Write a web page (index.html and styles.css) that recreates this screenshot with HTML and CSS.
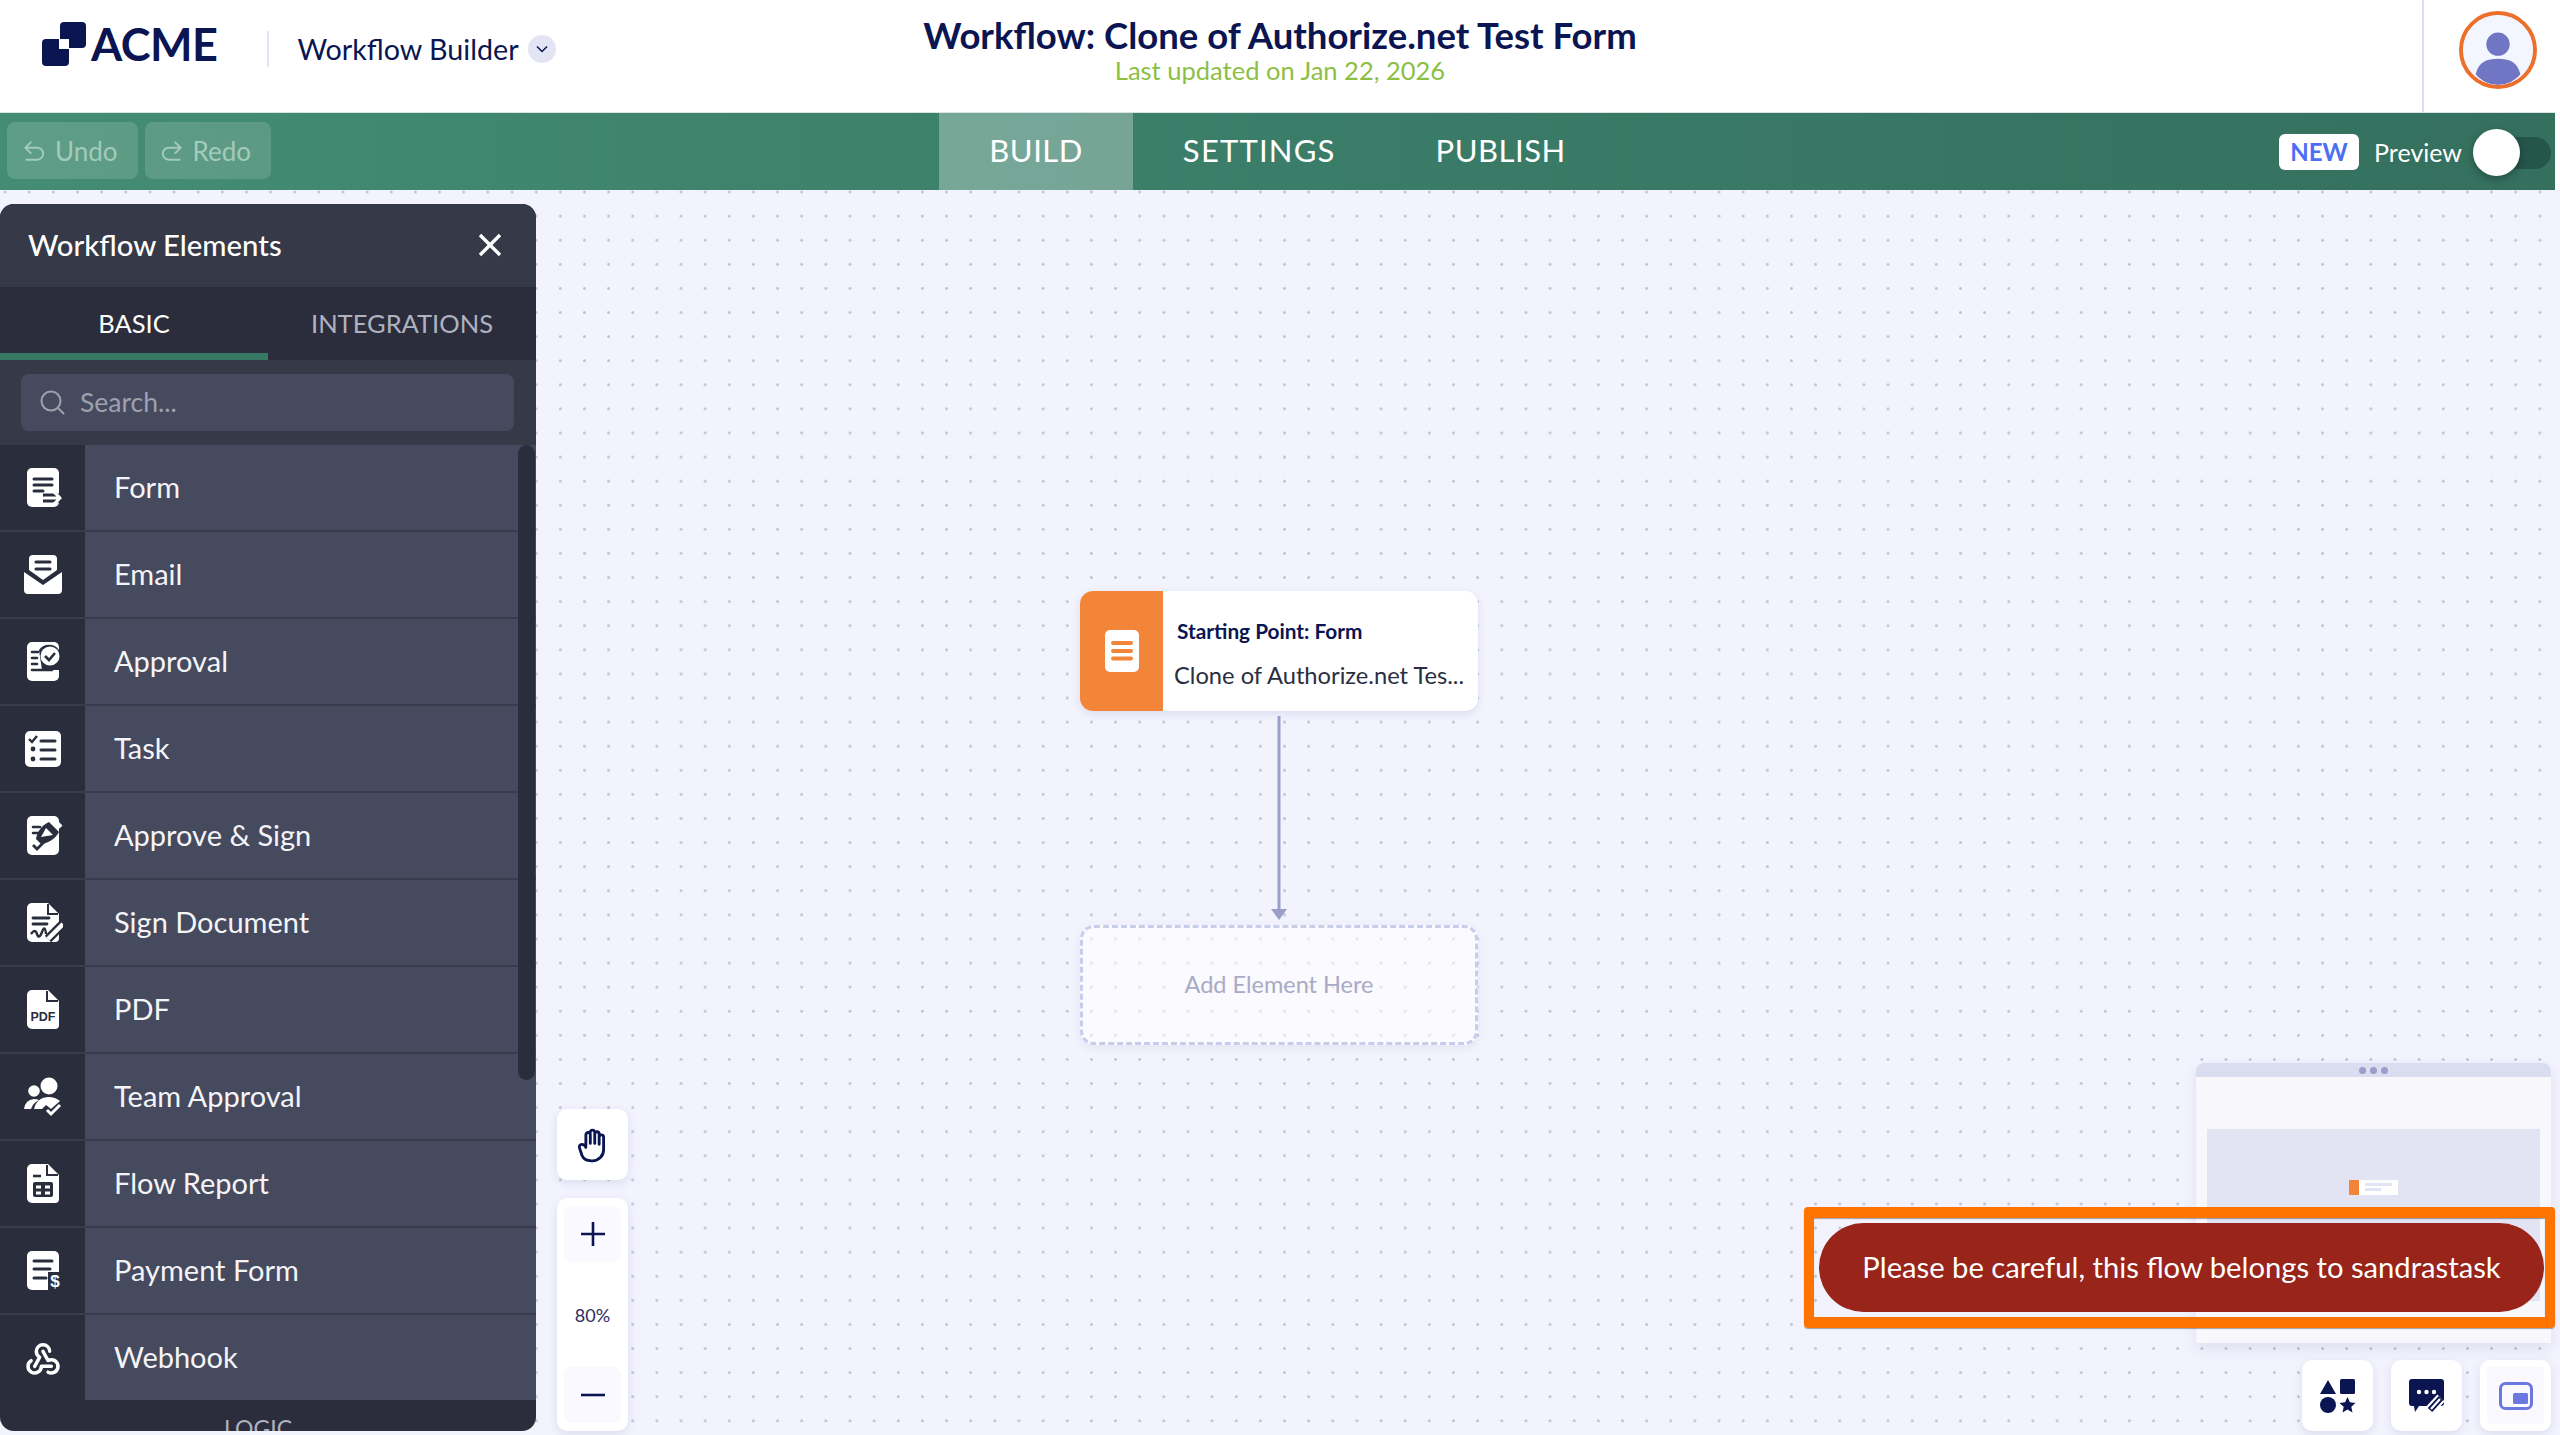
FILE: index.html
```html
<!DOCTYPE html>
<html lang="en">
<head>
<meta charset="utf-8">
<title>Workflow Builder</title>
<link rel="stylesheet" href="styles.css">
</head>
<body>
<header class="topbar">
  <div class="brand">
    <svg class="logo-mark" width="44" height="44" viewBox="0 0 44 44"><rect x="18" y="0" width="26" height="26" rx="4" fill="#0a1551"/><rect x="0" y="17" width="27" height="27" rx="4" fill="#0a1551"/><rect x="17" y="17" width="10" height="10" fill="#fff"/></svg>
    <span class="logo-text">ACME</span>
    <span class="brand-divider"></span>
    <span class="brand-product">Workflow Builder</span>
    <span class="brand-chevron"><svg width="16" height="16" viewBox="0 0 16 16"><path d="M3 5.500l5 5 5-5" fill="none" stroke="#0a1551" stroke-width="1.500"/></svg></span>
  </div>
  <div class="title-block">
    <div class="title">Workflow: Clone of Authorize.net Test Form</div>
    <div class="subtitle">Last updated on Jan 22, 2026</div>
  </div>
  <div class="account">
    <div class="avatar"><svg width="70" height="70" viewBox="0 0 72 72"><circle cx="36" cy="36" r="36" fill="#f3f6ff"/><circle cx="36" cy="30" r="12" fill="#7075c4"/><path d="M13 61c3-13 12-16 23-16s20 3 23 16c-6 7-14 11-23 11s-17-4-23-11z" fill="#7075c4"/></svg></div>
  </div>
</header>

<div class="navwrap">
<nav class="navbar">
  <div class="history">
    <button class="hist-btn"><svg width="26" height="26" viewBox="0 0 24 24" fill="none" stroke="currentColor" stroke-width="1.800" stroke-linecap="round" stroke-linejoin="round"><path d="M9 14l-5-5 5-5M4 9h11a5.500 5.500 0 0 1 0 11H5"/></svg>Undo</button>
    <button class="hist-btn"><svg width="26" height="26" viewBox="0 0 24 24" fill="none" stroke="currentColor" stroke-width="1.800" stroke-linecap="round" stroke-linejoin="round"><path d="M15 14l5-5-5-5M20 9H9a5.500 5.500 0 0 0 0 11h10"/></svg>Redo</button>
  </div>
  <div class="tabs">
    <a class="tab tab-active">BUILD</a>
    <a class="tab tab-wide">SETTINGS</a>
    <a class="tab">PUBLISH</a>
  </div>
  <div class="preview">
    <span class="badge-new">NEW</span>
    <span class="preview-label">Preview</span>
    <span class="toggle"><span class="toggle-knob"></span></span>
  </div>
</nav>
</div>

<main class="canvas">
  <aside class="panel">
    <div class="panel-head">
      <span>Workflow Elements</span>
      <svg width="24" height="24" viewBox="0 0 24 24"><path d="M2 2l20 20M22 2L2 22" stroke="#fff" stroke-width="3.400"/></svg>
    </div>
    <div class="panel-tabs">
      <div class="panel-tab panel-tab-active">BASIC</div>
      <div class="panel-tab">INTEGRATIONS</div>
    </div>
    <div class="panel-search">
      <div class="search-box">
        <svg width="26" height="26" viewBox="0 0 26 26" fill="none" stroke="#9ea0ad" stroke-width="2"><circle cx="12" cy="12" r="9.500"/><path d="M19 19l5.500 5.500" stroke-linecap="round"/></svg>
        <span>Search...</span>
      </div>
    </div>
    <div class="list">
      <div class="row"><div class="row-icon"><svg width="40" height="40" viewBox="0 0 40 40"><rect x="4" y="0" width="32" height="39" rx="5" fill="#fff"/><path d="M11 11h18M11 17h18M11 23h9" stroke="#2a2d3c" stroke-width="3" stroke-linecap="round"/><path d="M20 30h16" stroke="#2a2d3c" stroke-width="9"/><path d="M21 30h16M31 24l6 6-6 6" fill="none" stroke="#fff" stroke-width="3" stroke-linecap="round"/></svg></div><div class="row-label">Form</div></div>
      <div class="row"><div class="row-icon"><svg width="40" height="40" viewBox="0 0 40 40"><path d="M6 4a4 4 0 0 1 4-4h20a4 4 0 0 1 4 4v11l-14 10-14-10z" fill="#fff"/><path d="M13 7h14M13 14h14" stroke="#2a2d3c" stroke-width="3" stroke-linecap="round"/><path d="M1 17l19 13 19-13v18a4 4 0 0 1-4 4H5a4 4 0 0 1-4-4z" fill="#fff"/></svg></div><div class="row-label">Email</div></div>
      <div class="row"><div class="row-icon"><svg width="40" height="40" viewBox="0 0 40 40"><rect x="4" y="0" width="32" height="39" rx="5" fill="#fff"/><path d="M9 10h6M9 16h5M9 22h5M9 28h20" stroke="#2a2d3c" stroke-width="2.600" stroke-linecap="round"/><path d="M16 8a12 12 0 0 1 20 0v20H19z" fill="#2a2d3c"/><circle cx="27" cy="14" r="9.500" fill="#fff"/><path d="M22 14l4 4 6-7" fill="none" stroke="#2a2d3c" stroke-width="2.600"/></svg></div><div class="row-label">Approval</div></div>
      <div class="row"><div class="row-icon"><svg width="40" height="40" viewBox="0 0 40 40"><rect x="2" y="2" width="36" height="36" rx="5" fill="#fff"/><path d="M6 10l3 3 5-6" fill="none" stroke="#2a2d3c" stroke-width="2.400"/><circle cx="10" cy="20" r="2.400" fill="#2a2d3c"/><circle cx="10" cy="30" r="2.400" fill="#2a2d3c"/><path d="M18 12h14M18 21h14M18 30h14" stroke="#2a2d3c" stroke-width="3" stroke-linecap="round"/></svg></div><div class="row-label">Task</div></div>
      <div class="row"><div class="row-icon"><svg width="40" height="40" viewBox="0 0 40 40"><rect x="4" y="0" width="32" height="39" rx="5" fill="#fff"/><path d="M10 11h7M10 17h5" stroke="#2a2d3c" stroke-width="2.600" stroke-linecap="round"/><path d="M13 23c1-7 5-13 13-17l10 10c-4 7-10 11-18 12z" fill="#2a2d3c"/><path d="M18 21l5-9 7 7z" fill="#fff"/><path d="M30 3l8 8" stroke="#fff" stroke-width="4"/><path d="M10 29l4 4 8-8" fill="none" stroke="#2a2d3c" stroke-width="2.800"/></svg></div><div class="row-label">Approve &amp; Sign</div></div>
      <div class="row"><div class="row-icon"><svg width="40" height="40" viewBox="0 0 40 40"><path d="M9 0h16l11 11v24a4 4 0 0 1-4 4H9a5 5 0 0 1-5-5V5a5 5 0 0 1 5-5z" fill="#fff"/><path d="M25 1v10h10" fill="none" stroke="#2a2d3c" stroke-width="2"/><path d="M10 15h16M10 21h14" stroke="#2a2d3c" stroke-width="2.800" stroke-linecap="round"/><path d="M8 31q4-6 6 0t5-2 4 2" fill="none" stroke="#2a2d3c" stroke-width="2.400"/><path d="M25 36l15-15" stroke="#2a2d3c" stroke-width="9"/><path d="M25 36l15-15" stroke="#fff" stroke-width="4.500"/></svg></div><div class="row-label">Sign Document</div></div>
      <div class="row"><div class="row-icon"><svg width="40" height="40" viewBox="0 0 40 40"><path d="M9 0h16l11 11v24a4 4 0 0 1-4 4H9a5 5 0 0 1-5-5V5a5 5 0 0 1 5-5z" fill="#fff"/><path d="M24 1v10h11" fill="none" stroke="#2a2d3c" stroke-width="2"/><text class="icon-text" x="20" y="31" text-anchor="middle">PDF</text></svg></div><div class="row-label">PDF</div></div>
      <div class="row"><div class="row-icon"><svg width="40" height="40" viewBox="0 0 40 40"><circle cx="26" cy="9" r="8.500" fill="#fff"/><circle cx="11" cy="14" r="5.800" fill="#fff"/><path d="M1 32q1-9 10-10 3 0 5 1-6 3-8 9z" fill="#fff"/><path d="M11 32q3-12 15-12 6 0 11 4l-9 8-5-4-4 4z" fill="#fff"/><path d="M24 33l4 4 9-9" fill="none" stroke="#fff" stroke-width="3"/></svg></div><div class="row-label">Team Approval</div></div>
      <div class="row"><div class="row-icon"><svg width="40" height="40" viewBox="0 0 40 40"><path d="M9 0h16l11 11v24a4 4 0 0 1-4 4H9a5 5 0 0 1-5-5V5a5 5 0 0 1 5-5z" fill="#fff"/><path d="M24 1v10h11" fill="none" stroke="#2a2d3c" stroke-width="2"/><path d="M10 12h8" stroke="#2a2d3c" stroke-width="2.600"/><rect x="10" y="18" width="20" height="15" rx="2" fill="#2a2d3c"/><path d="M13 23h5M22 23h5M13 29h5M22 29h5" stroke="#fff" stroke-width="3"/></svg></div><div class="row-label">Flow Report</div></div>
      <div class="row"><div class="row-icon"><svg width="40" height="40" viewBox="0 0 40 40"><rect x="4" y="0" width="32" height="39" rx="5" fill="#fff"/><path d="M11 10h18M11 18h16M11 27h12" stroke="#2a2d3c" stroke-width="3" stroke-linecap="round"/><rect x="25" y="21" width="15" height="19" fill="#2a2d3c"/><text class="icon-dollar" x="32" y="36" text-anchor="middle">$</text></svg></div><div class="row-label">Payment Form</div></div>
      <div class="row"><div class="row-icon"><svg width="40" height="40" viewBox="0 0 24 24" fill="none" stroke="#fff" stroke-width="2.100" stroke-linecap="round" stroke-linejoin="round"><path d="M4.876 13.610a4 4 0 1 0 6.124 3.390h6M15.066 20.502a4 4 0 1 0 1.934-7.502c-.706 0-1.424.179-2 .5l-3-5.500M16 8a4 4 0 1 0-8 0c0 1.506.77 2.818 2 3.500l-3 5.500"/></svg></div><div class="row-label">Webhook</div></div>
    </div>
    <div class="section-label">LOGIC</div>
    <div class="scroll-thumb"></div>
  </aside>

  <div class="node">
    <div class="node-side"><svg width="36" height="44" viewBox="0 0 36 44"><rect x="1" y="1" width="34" height="42" rx="5" fill="#fff"/><path d="M9 14h18M9 22h18M9 29.500h18" stroke="#f28538" stroke-width="4" stroke-linecap="round"/></svg></div>
    <div class="node-body">
      <div class="node-title">Starting Point: Form</div>
      <div class="node-sub">Clone of Authorize.net Tes...</div>
    </div>
  </div>
  <svg class="connector" width="20" height="206" viewBox="0 0 20 206"><path d="M10 0v196" stroke="#9a9fca" stroke-width="3"/><path d="M2 193h16l-8 11z" fill="#9a9fca"/></svg>
  <div class="dropzone">Add Element Here</div>

  <div class="tool-hand"><svg width="38" height="40" viewBox="0 0 24 24" fill="none" stroke="#0a1551" stroke-width="1.800" stroke-linecap="round" stroke-linejoin="round"><path d="M7.500 12.500V5.500a1.400 1.400 0 0 1 2.800 0V11M10.300 4a1.400 1.400 0 0 1 2.800 0v7M13.100 5a1.400 1.400 0 0 1 2.800 0v6.500M15.900 7a1.400 1.400 0 0 1 2.800 0v8a7 7 0 0 1-7 7h-.7c-3 0-5-1-6-3.500L3.500 14c-.5-1.300.3-2.400 1.400-2.400 1.200 0 2 .6 2.600 1.900"/></svg></div>
  <div class="tool-zoom">
    <div class="zoom-btn"><svg width="26" height="26" viewBox="0 0 26 26"><path d="M13 1v24M1 13h24" stroke="#0a1551" stroke-width="2.600"/></svg></div>
    <div class="zoom-value">80%</div>
    <div class="zoom-btn"><svg width="26" height="26" viewBox="0 0 26 26"><path d="M1 13h24" stroke="#0a1551" stroke-width="2.600"/></svg></div>
  </div>

  <div class="minimap">
    <div class="minimap-head"><i></i><i></i><i></i></div>
    <div class="minimap-body">
      <div class="minimap-view"><div class="mini-node"><span class="mini-orange"></span><span class="mini-lines"><b></b><b></b></span></div></div>
    </div>
  </div>

  <div class="warning-frame"><div class="warning-pill">Please be careful, this flow belongs to sandrastask</div></div>

  <div class="corner-tools">
    <div class="corner-btn"><svg width="36" height="36" viewBox="0 0 36 36" fill="#0a1551"><path d="M8 2l8 14H0z"/><rect x="20" y="1" width="15" height="15" rx="1.500"/><circle cx="8" cy="27" r="8"/><path d="M27.500 19l2.400 5.300 5.600.6-4.200 3.800 1.200 5.800-5-2.900-5 2.900 1.200-5.800-4.200-3.800 5.600-.6z"/></svg></div>
    <div class="corner-btn"><svg width="36" height="36" viewBox="0 0 36 36"><path d="M3 1h29a3 3 0 0 1 3 3v21a3 3 0 0 1-3 3H10l-4 6-1-6H3a3 3 0 0 1-3-3V4a3 3 0 0 1 3-3z" fill="#0a1551"/><circle cx="10" cy="14" r="2.200" fill="#fff"/><circle cx="17.500" cy="14" r="2.200" fill="#fff"/><circle cx="25" cy="14" r="2.200" fill="#fff"/><path d="M20 33l12-13" stroke="#fff" stroke-width="10"/><path d="M21 32l11-12" stroke="#0a1551" stroke-width="6"/><path d="M22 31l9-10" stroke="#fff" stroke-width="2.200"/></svg></div>
    <div class="corner-btn"><div class="corner-inner"><svg width="34" height="28" viewBox="0 0 34 28"><rect x="1.500" y="1.500" width="31" height="25" rx="5" fill="none" stroke="#6b78e0" stroke-width="3"/><rect x="14" y="11" width="15" height="11" rx="1.500" fill="#6b78e0"/></svg></div></div>
  </div>
</main>
</body>
</html>
```
FILE: styles.css
```css
* { box-sizing: border-box; }
html, body { margin: 0; padding: 0; }
body {
  width: 2560px;
  height: 1435px;
  overflow: hidden;
  display: flex;
  flex-direction: column;
  font-family: "Lato", "Noto Sans", sans-serif;
  background: #fff;
  color: #0a1551;
}

/* top bar */
.topbar {
  height: 112px;
  flex: none;
  display: grid;
  grid-template-columns: 1fr auto 1fr;
  align-items: stretch;
  background: #fff;
}
.brand { display: flex; align-items: flex-start; padding: 22px 0 0 42px; }
.logo-mark { flex: none; }
.logo-text { font-size: 45px; font-weight: 700; line-height: 44px; margin-left: 5px; letter-spacing: -.5px; }
.brand-divider { width: 2px; height: 36px; margin: 9px 28px 0 50px; background: #e3e5f5; }
.brand-product { font-size: 28.700px; line-height: 54px; color: #0a1551; }
.brand-chevron {
  width: 28px; height: 28px; margin: 13px 0 0 9px; border-radius: 50%;
  background: #e3e5f5; display: flex; align-items: center; justify-content: center;
}
.title-block { text-align: center; padding-top: 14px; }
.title { font-size: 36.500px; font-weight: 700; line-height: 42px; color: #0a1551; }
.subtitle { font-size: 25.500px; line-height: 28px; color: #8cbf44; }
.account { display: flex; justify-content: flex-end; }
.account::before { content: ""; width: 2px; height: 112px; background: #dcdff2; }
.avatar {
  width: 78px; height: 78px; margin: 11px 23px 0 35px; border: 4px solid #ec6f2c; border-radius: 50%;
  overflow: hidden; background: #f3f6ff;
}
.avatar svg { display: block; }

/* nav bar */
.navwrap { height: 78px; flex: none; padding-right: 5px; background: #fff; }
.navbar {
  height: 78px;
  display: grid;
  grid-template-columns: 1fr auto 1fr;
  align-items: stretch;
  background: linear-gradient(90deg, #448d74, #3a7d68 50%, #35705e);
  border-top: 1px solid #d9e4e0;
  color: #fff;
}
.history { display: flex; gap: 7px; align-items: flex-start; padding: 9px 0 0 7px; }
.hist-btn {
  height: 57px; border: 0; border-radius: 8px; padding: 0 20px 0 14px;
  display: flex; align-items: center; gap: 8px;
  background: rgba(255,255,255,.14); color: #a3cbbc;
  font: 400 26px "Lato", sans-serif;
}
.tabs { display: flex; }
.tab { font-size: 31px; letter-spacing: .5px; line-height: 74px; padding: 0 50px; color: #fff; }
.tab-wide { letter-spacing: 1.200px; }
.tab-active { background: rgba(255,255,255,.3); }
.preview { display: flex; justify-content: flex-end; align-items: center; padding-right: 4px; }
.badge-new {
  width: 80px; height: 36px; border-radius: 6px; background: #fff; color: #4c6ef5;
  font-size: 24px; font-weight: 700; line-height: 36px; text-align: center;
}
.preview-label { font-size: 25px; margin: 0 18px 0 15px; }
.toggle {
  position: relative; width: 71px; height: 32px; border-radius: 16px; background: #25564a; margin-top: 2px;
}
.toggle-knob {
  position: absolute; left: -7px; top: -8px; width: 47px; height: 47px; border-radius: 50%;
  background: #fff; box-shadow: 0 3px 8px rgba(0,0,0,.3);
}

/* canvas */
.canvas {
  position: relative;
  flex: 1;
  overflow: hidden;
  background-color: #f3f3fe;
  background-image: radial-gradient(circle at center, #bfc1d4 1.100px, transparent 1.600px);
  background-size: 24.150px 24.100px;
  background-position: -7px -10px;
}

/* panel */
.panel {
  position: absolute; left: 0; top: 14px; bottom: 4px; width: 536px;
  border-radius: 14px; overflow: hidden;
  display: flex; flex-direction: column;
  background: #2b2d3c; color: #fff;
}
.panel-head {
  flex: none; height: 83px; padding: 0 34px 2px 28px;
  display: flex; align-items: center; justify-content: space-between;
  background: #363948; font-size: 29.300px; font-weight: 500;
}
.panel-tabs { flex: none; height: 73px; display: flex; background: #2b2d3c; }
.panel-tab {
  width: 268px; text-align: center; font-size: 25.500px; line-height: 72px; color: #b0b2c0;
}
.panel-tab-active { color: #fff; border-bottom: 7px solid #367a63; }
.panel-search { flex: none; height: 85px; padding: 14px 22px 0 21px; background: #363948; }
.search-box {
  height: 57px; border-radius: 8px; background: #454a5f; padding: 0 18px 2px;
  display: flex; align-items: center; gap: 15px; color: #9ea0ad; font-size: 26.500px;
}
.list { flex: none; display: flex; flex-direction: column; gap: 2px; background: #393c4d; }
.row { height: 85px; display: flex; flex: none; background: #454a5f; }
.row-icon {
  width: 85px; flex: none; background: #2a2d3c;
  display: flex; align-items: center; justify-content: center;
}
.row-label { flex: 1; padding-left: 29px; font-size: 29px; line-height: 84px; color: #f4f4f7; }
.icon-text { font: 700 12.500px "Liberation Sans", sans-serif; fill: #2a2d3c; }
.icon-dollar { font: 700 17px "Liberation Sans", sans-serif; fill: #fff; }
.section-label { flex: none; margin: 14px 0 0; padding-right: 20px; text-align: center; font-size: 23px; color: #b0b2c0; }
.scroll-thumb {
  position: absolute; left: 518px; top: 241px; width: 17px; height: 635px;
  border-radius: 9px; background: #2a2d3c;
}

/* diagram */
.node {
  position: absolute; left: 1080px; top: 401px; width: 398px; height: 120px;
  display: flex; border-radius: 13px; overflow: hidden; background: #fff;
  box-shadow: 0 3px 8px rgba(60,65,120,.12);
}
.node-side { width: 83px; flex: none; background: #f28538; display: flex; align-items: center; justify-content: center; }
.node-body { flex: 1; padding: 27px 0 0 11px; white-space: nowrap; }
.node-title { font-size: 20.800px; font-weight: 700; line-height: 26px; padding-left: 3px; color: #0a1551; }
.node-sub { font-size: 23.700px; line-height: 30px; margin-top: 16px; color: #2b2e40; }
.connector { position: absolute; left: 1269px; top: 526px; }
.dropzone {
  position: absolute; left: 1080px; top: 735px; width: 398px; height: 120px;
  display: flex; align-items: center; justify-content: center; padding-bottom: 3px;
  border: 3px dashed #c9cdeb; border-radius: 14px; background: rgba(255,255,255,.55);
  box-shadow: 0 3px 8px rgba(60,65,120,.08);
  font-size: 23.500px; color: #a9abc6;
}
.tool-hand, .tool-zoom {
  position: absolute; left: 557px; width: 71px; background: #fff; border-radius: 10px;
  box-shadow: 0 3px 10px rgba(60,65,120,.12);
}
.tool-hand { top: 919px; height: 71px; display: flex; align-items: center; justify-content: center; }
.tool-zoom {
  top: 1008px; height: 233px; padding: 8px 7px;
  display: flex; flex-direction: column; justify-content: space-between;
}
.zoom-btn { height: 56px; border-radius: 8px; background: #f9f9ff; display: flex; align-items: center; justify-content: center; }
.zoom-value { text-align: center; font-size: 18px; color: #2b2e5e; }

/* minimap */
.minimap {
  position: absolute; right: 9px; top: 873px; width: 355px; height: 280px;
  background: #f7f7fc; box-shadow: 0 6px 14px rgba(60,65,120,.1);
  border-radius: 8px 8px 0 0; overflow: hidden;
}
.minimap-head { height: 14px; background: #dadcef; display: flex; gap: 4px; align-items: center; justify-content: center; }
.minimap-head i { width: 7px; height: 7px; border-radius: 50%; background: #9a9fca; }
.minimap-body { padding: 52px 11px 0; }
.minimap-view { height: 172px; padding-top: 51px; background: #e2e4f3; display: flex; justify-content: center; align-items: flex-start; }
.mini-node { width: 49px; height: 15px; display: flex; background: #fff; }
.mini-orange { width: 10px; background: #f28538; }
.mini-lines { flex: 1; padding: 3px 6px; display: flex; flex-direction: column; gap: 2px; }
.mini-lines b { height: 3px; background: #e2e4f3; }
.mini-lines b:last-child { width: 60%; }

/* warning */
.warning-frame {
  position: absolute; left: 1804px; top: 1017px; width: 751px; height: 121px;
  border: 10px solid #ff7300; border-top-width: 11px; border-bottom-width: 11px; border-radius: 4px; padding: 5px 1px 5px 5px;
  box-shadow: 0 1px 1px rgba(0,0,0,.35), inset 0 1px 1px rgba(0,0,0,.35);
}
.warning-pill {
  height: 89px; border-radius: 45px; background: #98241a; color: #fff;
  display: flex; align-items: center; justify-content: center; padding-bottom: 2px;
  font-size: 29.200px; white-space: nowrap;
}

/* corner tools */
.corner-tools { position: absolute; right: 9px; bottom: 4px; display: flex; gap: 18px; }
.corner-btn {
  width: 71px; height: 71px; border-radius: 10px; background: #fff;
  display: flex; align-items: center; justify-content: center;
  box-shadow: 0 3px 10px rgba(60,65,120,.12);
}
.corner-inner { width: 57px; height: 57px; background: #f9f9ff; display: flex; align-items: center; justify-content: center; }
```
